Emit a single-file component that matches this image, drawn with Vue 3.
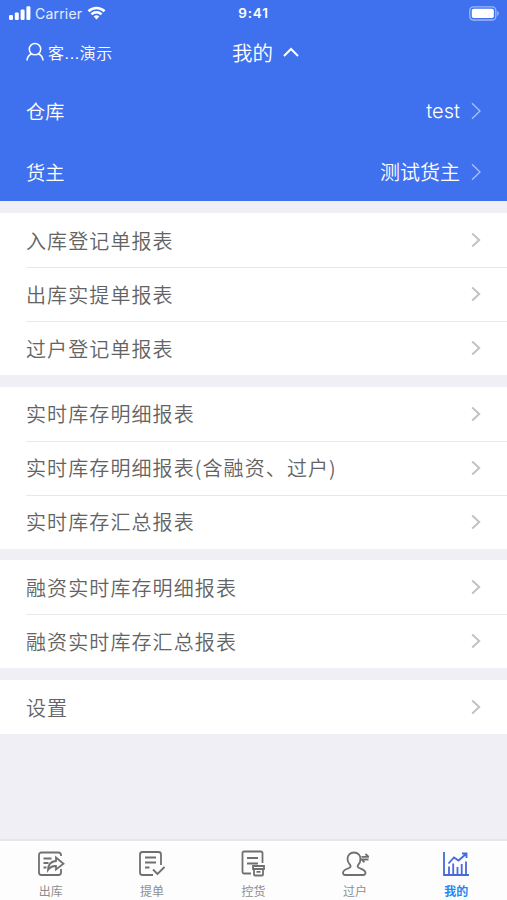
<template>
  <div class="page">
    <header class="header">
      <div class="status-bar">
        <div class="status-left">
          <svg class="signal" viewBox="0 0 22 14">
            <rect x="0" y="9" width="4" height="5" rx="1.2" />
            <rect x="5.8" y="6.5" width="4" height="7.5" rx="1.2" />
            <rect x="11.6" y="3.5" width="4" height="10.5" rx="1.2" />
            <rect x="17.4" y="0.3" width="4" height="13.7" rx="1.2" />
          </svg>
          <span class="carrier">Carrier</span>
          <svg class="wifi" viewBox="0 0 20 15">
            <path d="M1.4 5.6a12.3 12.3 0 0 1 17.2 0" />
            <path d="M4.6 8.9a7.7 7.7 0 0 1 10.8 0" />
            <path class="wifi-dot" d="M10 14.4l-3-3.1a4.3 4.3 0 0 1 6 0z" />
          </svg>
        </div>
        <span class="time">9:41</span>
        <div class="status-right">
          <svg class="battery" viewBox="0 0 31 15">
            <rect class="shell" x="0.8" y="0.8" width="26" height="13.2" rx="3.6" />
            <rect class="level" x="2.8" y="2.8" width="22" height="9.2" rx="1.8" />
            <path class="cap" d="M28.2 5c2 .6 2 4.2 0 4.8z" />
          </svg>
        </div>
      </div>

      <div class="nav">
        <div class="user">
          <svg class="user-icon" viewBox="0 0 19 20">
            <circle cx="9.5" cy="7" r="6" />
            <path d="M1 19c.4-3.7 2.4-6.2 5.2-7.2M18 19c-.4-3.7-2.4-6.2-5.2-7.2" />
          </svg>
          <span>客...演示</span>
        </div>
        <div class="title">
          <span>我的</span>
          <svg class="caret" viewBox="0 0 16 10">
            <path d="M1 9l7-7 7 7" />
          </svg>
        </div>
        <div class="nav-space"></div>
      </div>

      <div v-for="item in filters" :key="item.label" class="filter">
        <span>{{ item.label }}</span>
        <span class="filter-value">{{ item.value }}</span>
        <svg class="filter-arrow" viewBox="0 0 10 18">
          <path d="M1 1.2l8 7.8-8 7.8" />
        </svg>
      </div>
    </header>

    <main class="content">
      <section v-for="(group, i) in groups" :key="i" class="group">
        <div v-for="name in group" :key="name" class="cell">
          <span>{{ name }}</span>
          <svg class="arrow" viewBox="0 0 10 16">
            <path d="M1.2 1.5l7 6.5-7 6.5" />
          </svg>
        </div>
      </section>
    </main>

    <nav class="tabbar">
      <div
        v-for="tab in tabs"
        :key="tab.label"
        class="tab"
        :class="{ active: tab.label === current }"
        @click="current = tab.label"
      >
        <svg class="tab-icon" viewBox="0 0 28 28">
          <path v-for="d in tab.paths" :key="d" :d="d" />
        </svg>
        <span>{{ tab.label }}</span>
      </div>
    </nav>
  </div>
</template>

<script setup>
import { ref } from 'vue'

const current = ref('我的')

const filters = [
  { label: '仓库', value: 'test' },
  { label: '货主', value: '测试货主' },
]

const groups = [
  ['入库登记单报表', '出库实提单报表', '过户登记单报表'],
  ['实时库存明细报表', '实时库存明细报表(含融资、过户)', '实时库存汇总报表'],
  ['融资实时库存明细报表', '融资实时库存汇总报表'],
  ['设置'],
]

const tabs = [
  {
    label: '出库',
    paths: [
      'M24 6V5a2.5 2.5 0 0 0-2.5-2.5h-17A2.5 2.5 0 0 0 2 5v17.5A2.5 2.5 0 0 0 4.5 25h17a2.5 2.5 0 0 0 2.5-2.5V19',
      'M6.5 8.5h8M6.5 13h5M6.5 17.5h3',
      'M19 7.5l7.5 6.2-7.5 5.8v-3.5c-3.5-.2-6 1.2-8 4 .2-5.5 3-8.7 8-9z',
    ],
  },
  {
    label: '提单',
    paths: [
      'M23 15V4.5A2.5 2.5 0 0 0 20.5 2h-16A2.5 2.5 0 0 0 2 4.5v18A2.5 2.5 0 0 0 4.5 25H15',
      'M7 7.5h11M7 12.5h11M7 17.5h4.5',
      'M15 19.5l4.5 4.5 7-7',
    ],
  },
  {
    label: '控货',
    paths: [
      'M22.5 13V3A1.5 1.5 0 0 0 21 1.5H4A1.5 1.5 0 0 0 2.5 3v19A1.5 1.5 0 0 0 4 23.5h7',
      'M7 8h11M7 13.5h11',
      'M13 16h11v3H13zM14 19v5.5q0 1 1 1h7q1 0 1-1V19M16.5 21.8h4',
    ],
  },
  {
    label: '过户',
    paths: [
      'M13 2.5c-4 0-6.5 2.8-6.5 6.5 0 3 1.2 4.5 2.7 6 .8 1 .5 2.2-.7 2.8-3.5 1.7-6.5 2.2-6.5 5 0 1.4.8 2.2 2.2 2.2h18c1.4 0 2.3-.8 2.3-2.2 0-2.8-3.5-3.3-6.7-5-1.2-.7-1.5-1.8-.7-2.8 1.5-1.5 2.4-3 2.4-6 0-3.7-2.5-6.5-6.5-6.5z',
      'M20.5 6.8h7L24.5 4M27.5 9.5h-7l3 2.8',
    ],
  },
  {
    label: '我的',
    paths: [
      'M2 2v23h25',
      'M7 24v-7.5M11.2 24V13.5M15.5 24v-7M19.7 24V14M24 24V11.5',
      'M6.5 13.5l5.5-6 4.5 3L24 4M20 3.5h4.5V8',
    ],
  },
]
</script>

<style>
body {
  margin: 0;
  background: #f0eff5;
}
</style>

<style scoped>
.page {
  height: 900px;
  display: flex;
  flex-direction: column;
  overflow: hidden;
  background: #f0eff5;
  font-family: "Noto Sans CJK SC", sans-serif;
}

svg {
  display: block;
  flex-shrink: 0;
  fill: none;
  stroke: currentColor;
}

.header {
  height: 201px;
  flex-shrink: 0;
  background: #3f71ee;
  color: #fff;
  font-weight: 350;
}

.status-bar {
  display: flex;
  align-items: center;
  height: 26px;
  padding: 0 7px 0 9px;
  font-family: Inter, sans-serif;
  font-weight: 400;
}

.status-left,
.status-right {
  flex: 1;
  display: flex;
  align-items: center;
}

.status-right {
  justify-content: flex-end;
}

.signal {
  width: 22px;
  height: 14px;
  fill: #fff;
  stroke: none;
}

.carrier {
  margin: 0 5px 0 4px;
  font-size: 14px;
  letter-spacing: 0.2px;
  color: #e6edff;
}

.wifi {
  width: 19px;
  height: 14px;
  stroke-width: 2.8;
}

.wifi-dot {
  fill: #fff;
  stroke: none;
}

.time {
  margin-right: 2px;
  font-size: 13.5px;
  font-weight: 600;
  letter-spacing: 0.8px;
}

.battery {
  width: 31px;
  height: 15px;
}

.shell {
  stroke: #9db7f8;
  stroke-width: 1.3;
}

.level {
  fill: #fff;
  stroke: none;
}

.cap {
  fill: #9db7f8;
  stroke: none;
}

.nav {
  display: flex;
  align-items: center;
  height: 54px;
  box-sizing: border-box;
  padding: 0 26px 2px;
}

.user,
.nav-space {
  flex: 1;
}

.user {
  display: flex;
  align-items: center;
  gap: 4px;
  font-family: "Liberation Sans", "Noto Sans CJK SC", sans-serif;
  font-size: 16px;
  letter-spacing: 0.6px;
}

.user-icon {
  width: 18px;
  height: 20px;
  stroke-width: 1.6;
}

.title {
  display: flex;
  align-items: center;
  gap: 10px;
  margin-left: 24px;
  font-size: 20.5px;
}

.caret {
  width: 16px;
  height: 10px;
  stroke-width: 2;
}

.filter {
  display: flex;
  align-items: center;
  height: 61px;
  padding: 0 26px;
  font-size: 19.2px;
}

.filter-value {
  margin-left: auto;
  font-family: Inter, "Noto Sans CJK SC", sans-serif;
  font-size: 20px;
}

.filter-arrow {
  width: 10px;
  height: 18px;
  margin-left: 11px;
  color: #a9c1fb;
  stroke-width: 1.3;
}

.content {
  flex: 1;
  display: flex;
  flex-direction: column;
  gap: 11.7px;
  padding-top: 12px;
}

.group {
  background: #fff;
}

.cell {
  display: flex;
  align-items: center;
  justify-content: space-between;
  height: 54px;
  box-sizing: border-box;
  margin-left: 26px;
  padding-right: 26px;
  color: #636363;
  font-size: 20px;
  font-weight: 350;
  letter-spacing: 1.1px;
}

.cell + .cell {
  padding-bottom: 1px;
  border-top: 1px solid #e8e8ea;
}

.arrow {
  width: 10px;
  height: 16px;
  color: #c2c2c5;
  stroke-width: 2;
}

.tabbar {
  display: flex;
  height: 61px;
  flex-shrink: 0;
  box-sizing: border-box;
  border-top: 2px solid #e5e5ea;
  background: #fdfdfe;
}

.tab {
  flex: 1;
  display: flex;
  flex-direction: column;
  align-items: center;
  padding-top: 9px;
  color: #8e8e8e;
  font-size: 12px;
  line-height: 18px;
}

.tab-icon {
  width: 28px;
  height: 28px;
  margin-bottom: 4px;
  color: #707070;
  stroke-width: 1.8;
}

.active {
  color: #2388f5;
  font-weight: 700;
}

.active .tab-icon {
  color: #4669dc;
}
</style>
